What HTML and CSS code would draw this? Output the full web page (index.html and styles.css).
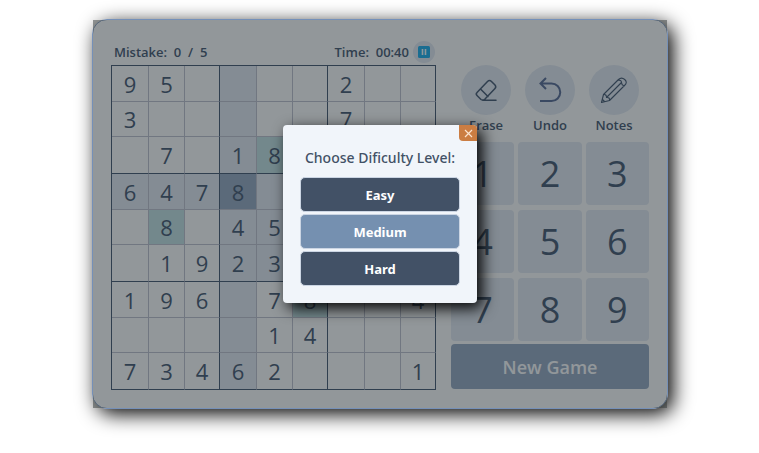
FILE: index.html
```html
<!DOCTYPE html>
<html lang="en">
<head>
<meta charset="utf-8">
<title>Sudoku</title>
<link rel="stylesheet" href="styles.css">
</head>
<body>
<main class="game">
  <section class="play">
    <header class="status">
      <span>Mistake:&nbsp; 0&nbsp; /&nbsp; 5</span>
      <div class="timer">
        <span>Time:&nbsp; 00:40</span>
        <button class="pause" type="button" aria-label="Pause">
          <svg width="12" height="12" viewBox="0 0 12 12"><rect width="12" height="12" rx="1.5" fill="#00a0e8"/><path d="M4.500 3v6M7.500 3v6" stroke="#e8f4fa" stroke-width="1.600"/></svg>
        </button>
      </div>
    </header>
    <table class="board">
      <tbody>
        <tr><td>9</td><td>5</td><td></td><td class="peer"></td><td></td><td></td><td>2</td><td></td><td></td></tr>
        <tr><td>3</td><td></td><td></td><td class="peer"></td><td></td><td></td><td>7</td><td></td><td></td></tr>
        <tr><td></td><td>7</td><td></td><td class="peer">1</td><td class="same">8</td><td></td><td></td><td></td><td></td></tr>
        <tr><td class="peer">6</td><td class="peer">4</td><td class="peer">7</td><td class="selected">8</td><td class="peer"></td><td class="peer"></td><td class="peer"></td><td class="peer"></td><td class="peer"></td></tr>
        <tr><td></td><td class="same">8</td><td></td><td class="peer">4</td><td class="peer">5</td><td class="peer"></td><td></td><td></td><td></td></tr>
        <tr><td></td><td>1</td><td>9</td><td class="peer">2</td><td class="peer">3</td><td class="peer"></td><td></td><td></td><td></td></tr>
        <tr><td>1</td><td>9</td><td>6</td><td class="peer"></td><td>7</td><td class="same">8</td><td></td><td></td><td>4</td></tr>
        <tr><td></td><td></td><td></td><td class="peer"></td><td>1</td><td>4</td><td></td><td></td><td></td></tr>
        <tr><td>7</td><td>3</td><td>4</td><td class="peer">6</td><td>2</td><td></td><td></td><td></td><td>1</td></tr>
      </tbody>
    </table>
  </section>
  <section class="controls">
    <div class="tools">
      <button class="tool" type="button">
        <span class="disc"><svg width="26" height="26" viewBox="0 0 26 26"><g fill="none" stroke="currentColor" stroke-width="1.500" stroke-linejoin="round" stroke-linecap="round"><path d="M8 22.500 4 18.500Q2.500 17 4 15.500L14.500 4.500Q16.500 2.500 18.500 4.500L22 8Q23.500 10 22 11.500L12 22Q10 24 8 22.500ZM7.500 12l7.500 7.500M10 23.300h13"/></g></svg></span>
        <span>Erase</span>
      </button>
      <button class="tool" type="button">
        <span class="disc"><svg width="26" height="26" viewBox="0 0 26 26"><path d="M9 1 3.500 6.500 9 12M4 6.500h10.500a8.700 8.700 0 0 1 0 17.500H3" fill="none" stroke="#40588a" stroke-width="2"/></svg></span>
        <span>Undo</span>
      </button>
      <button class="tool" type="button">
        <span class="disc"><svg width="28" height="28" viewBox="0 0 28 28"><g fill="none" stroke="currentColor" stroke-width="1.100" stroke-linejoin="round"><path d="M1.500 26.500 3.500 18.500 18.500 3.500Q21.500.7 24.700 3.500T24.500 9.500L9.500 24.500ZM3.500 18.500q3-.5 3 3 3.500-.500 3 3M6.500 21.500l15-15M18 4q3.500 0 3.500 2.500T24 10M2.500 23.500l2 2"/></g></svg></span>
        <span>Notes</span>
      </button>
    </div>
    <div class="keypad">
      <button type="button">1</button><button type="button">2</button><button type="button">3</button>
      <button type="button">4</button><button type="button">5</button><button type="button">6</button>
      <button type="button">7</button><button type="button">8</button><button type="button">9</button>
    </div>
    <button class="new-game" type="button">New Game</button>
  </section>
  <div class="overlay">
    <div class="dialog" role="dialog" aria-labelledby="level-title">
      <button class="close" type="button" aria-label="Close"><svg width="9" height="9" viewBox="0 0 9 9"><path d="m1 1 7 7M8 1 1 8" stroke="#fbe3cf" stroke-width="1.200"/></svg></button>
      <h2 id="level-title">Choose Dificulty Level:</h2>
      <button class="level" type="button">Easy</button>
      <button class="level active" type="button">Medium</button>
      <button class="level" type="button">Hard</button>
    </div>
  </div>
</main>
</body>
</html>
```
FILE: styles.css
```css
* {
  box-sizing: border-box;
}

body {
  margin: 0;
  padding: 19px 91px 44px 92px;
  background: #fff;
  color: #2c4464;
  font: 14px/20px "Noto Sans", "Open Sans", sans-serif;
}

button {
  margin: 0;
  padding: 0;
  border: 0;
  font: inherit;
  color: inherit;
  cursor: pointer;
}

svg {
  display: block;
}

.game {
  position: relative;
  display: flex;
  align-items: flex-end;
  gap: 15px;
  padding: 18px;
  border: 1px solid #7590b8;
  border-radius: 15px;
  background: #f1f5fb;
  box-shadow: 5px 5px 20px #000;
}

.status {
  display: flex;
  justify-content: space-between;
  align-items: center;
  height: 27px;
  padding: 0 1px 0 3px;
  font-family: "Open Sans", "Noto Sans", sans-serif;
  font-size: 13px;
  font-weight: 600;
}

.timer {
  display: flex;
  align-items: center;
  gap: 4px;
}

.pause {
  display: grid;
  place-items: center;
  width: 22px;
  height: 22px;
  border-radius: 50%;
  background: #d4deee;
}

.board {
  table-layout: fixed;
  width: 325px;
  border-collapse: separate;
  border-spacing: 0;
  border: solid #2c4464;
  border-width: 1px 0 0 1px;
}

.board td {
  width: 36px;
  height: 36px;
  padding: 0;
  border: solid #aeb4c8;
  border-width: 0 1px 1px 0;
  font-family: "Open Sans", "Noto Sans", sans-serif;
  font-size: 22px;
  line-height: 30px;
  text-align: center;
}

.board td:nth-child(3n + 1) {
  width: 37px;
}

.board td:nth-child(3n) {
  width: 35px;
  border-right-color: #2c4464;
}

.board tr:nth-child(3n + 2) td {
  height: 35px;
}

.board tr:nth-child(3n) td {
  height: 37px;
  border-bottom-color: #2c4464;
}

.board .peer {
  background: #d4deee;
}

.board .same {
  background: #b2d6de;
}

.board .selected {
  background: #829aba;
}

.controls {
  flex: 1;
  padding-bottom: 1px;
}

.tools {
  display: flex;
  justify-content: center;
  gap: 14px;
  margin-bottom: 7px;
}

.tool {
  display: flex;
  flex-direction: column;
  align-items: center;
  width: 50px;
  background: none;
  font-family: "Open Sans", "Noto Sans", sans-serif;
  font-size: 13px;
  font-weight: 600;
}

.disc {
  display: grid;
  place-items: center;
  width: 50px;
  height: 50px;
  border-radius: 50%;
  background: #d4deee;
}

.keypad {
  display: grid;
  grid-template-columns: repeat(3, 1fr);
  gap: 5px 4px;
}

.keypad button {
  height: 63px;
  border-radius: 4px;
  background: #d4deee;
  font-family: "Open Sans", "Noto Sans", sans-serif;
  font-size: 36px;
  line-height: 48px;
}

.new-game {
  width: 100%;
  height: 45px;
  margin-top: 3px;
  border-radius: 4px;
  background: #829aba;
  color: #f1f5fb;
  font-family: "Open Sans", "Noto Sans", sans-serif;
  font-size: 18px;
  font-weight: 600;
}

.overlay {
  position: absolute;
  inset: 0;
  display: grid;
  place-items: center;
  background: rgba(51, 57, 57, 0.5);
}

.dialog {
  position: relative;
  display: flex;
  flex-direction: column;
  gap: 2px;
  width: 194px;
  padding: 23px 17px 17px;
  border-radius: 4px;
  background: #f1f5fa;
  box-shadow: 5px 5px 15px #000;
  color: #425166;
}

.dialog h2 {
  margin: 0 0 7px;
  font-size: 14px;
  font-weight: 500;
  text-align: center;
  white-space: nowrap;
}

.close {
  position: absolute;
  top: 0;
  right: 0;
  display: grid;
  place-items: center;
  width: 18px;
  height: 16px;
  border-radius: 0 4px 0 4px;
  background: #cb7d42;
}

.level {
  height: 35px;
  border: 1px solid #cbd5e3;
  border-radius: 5px;
  background: #425166;
  color: #fff;
  font-size: 13px;
  font-weight: 700;
}

.level.active {
  background: #7590b0;
}
```
